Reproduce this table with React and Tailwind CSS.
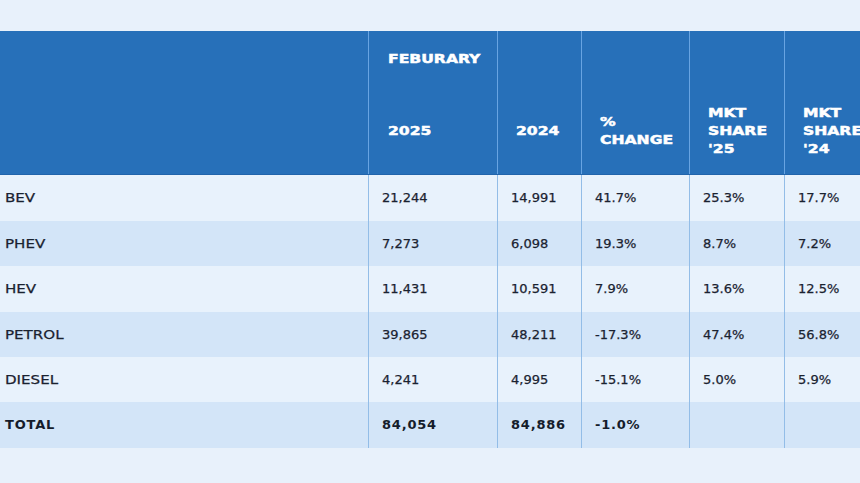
import React from "react";

const cols = "grid grid-cols-[368px_129px_84px_108px_95px_140px]";

const rows = [
  ["BEV", "21,244", "14,991", "41.7%", "25.3%", "17.7%"],
  ["PHEV", "7,273", "6,098", "19.3%", "8.7%", "7.2%"],
  ["HEV", "11,431", "10,591", "7.9%", "13.6%", "12.5%"],
  ["PETROL", "39,865", "48,211", "-17.3%", "47.4%", "56.8%"],
  ["DIESEL", "4,241", "4,995", "-15.1%", "5.0%", "5.9%"],
];
const heights = ["h-[46px]", "h-[45px]", "h-[46px]", "h-[45px]", "h-[45px]"];

function H({ children }) {
  return (
    <div className="origin-left scale-x-[1.2] whitespace-nowrap text-[13px] font-bold leading-[18px] text-white [-webkit-text-stroke:0.5px_#ffffff]">
      {children}
    </div>
  );
}

function HeadCell({ children }) {
  return (
    <div className="flex items-center border-l border-[#68a4e2] pl-[18px] pt-[57px]">
      <div>{children}</div>
    </div>
  );
}

export default function App() {
  return (
    <div
      className="h-[483px] w-[860px] overflow-hidden bg-[#e8f1fb] pt-[31px]"
      style={{ fontFamily: '"DejaVu Sans", sans-serif' }}
    >
      <div className="w-[924px]">
        <div className={`${cols} h-[144px] border-b border-[#2164ab] bg-[#2770b9]`}>
          <div />
          <div className="flex flex-col border-l border-[#68a4e2] pl-[19px]">
            <div className="h-[57px] pt-[19px]">
              <H>FEBURARY</H>
            </div>
            <div className="flex flex-1 items-center">
              <H>2025</H>
            </div>
          </div>
          <HeadCell>
            <H>2024</H>
          </HeadCell>
          <HeadCell>
            <H>%</H>
            <H>CHANGE</H>
          </HeadCell>
          <HeadCell>
            <H>MKT</H>
            <H>SHARE</H>
            <H>'25</H>
          </HeadCell>
          <HeadCell>
            <H>MKT</H>
            <H>SHARE</H>
            <H>'24</H>
          </HeadCell>
        </div>
        {rows.map((r, i) => (
          <div
            key={r[0]}
            className={`${cols} ${heights[i]} ${i % 2 === 0 ? "bg-[#e8f2fc]" : "bg-[#d3e5f8]"} text-[13px] text-[#1a2230] [-webkit-text-stroke:0.25px_#1a2230]`}
          >
            <div className="flex items-center pl-[5px]">
              <span className="origin-left scale-x-[1.16]">{r[0]}</span>
            </div>
            {r.slice(1).map((v, j) => (
              <div key={j} className="flex items-center border-l border-[#93bde7] pl-[13px]">
                {v}
              </div>
            ))}
          </div>
        ))}
        <div className={`${cols} h-[46px] bg-[#d3e5f8] text-[13px] font-bold tracking-[0.8px] text-[#151c2b]`}>
          <div className="flex items-center pl-[5px]">TOTAL</div>
          <div className="flex items-center border-l border-[#93bde7] pl-[13px]">84,054</div>
          <div className="flex items-center border-l border-[#93bde7] pl-[13px]">84,886</div>
          <div className="flex items-center border-l border-[#93bde7] pl-[13px]">-1.0%</div>
          <div className="border-l border-[#93bde7]" />
          <div className="border-l border-[#93bde7]" />
        </div>
      </div>
    </div>
  );
}
